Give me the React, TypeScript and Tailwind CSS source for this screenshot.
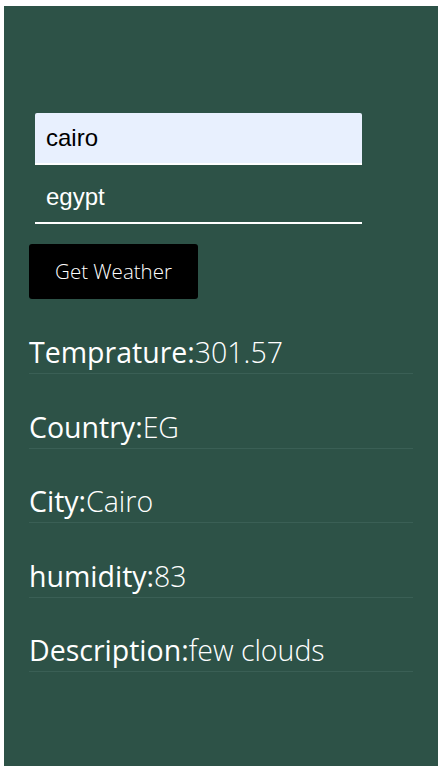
import React from "react";

const rows: [string, string][] = [
  ["Temprature:", "301.57"],
  ["Country:", "EG"],
  ["City:", "Cairo"],
  ["humidity:", "83"],
  ["Description:", "few clouds"],
];

export default function App() {
  return (
    <div className="bg-white pt-[6px] pb-[6px] pl-[4px] pr-[2px]">
      <div className="h-[760px] bg-[#2d5247] px-[25px] pt-[107px] font-['Open_Sans',sans-serif]">
        <div className="ml-[6px] flex w-[327px] flex-col gap-[7px]">
          <input
            defaultValue="cairo"
            className="h-[52px] w-full rounded-t-[2px] border-b-[2px] border-white bg-[#e8f0fe] px-[11px] font-['Liberation_Sans',Arial,sans-serif] text-[24px] text-black outline-none"
          />
          <input
            defaultValue="egypt"
            className="h-[52px] w-full border-b-[2px] border-white bg-transparent px-[11px] font-['Liberation_Sans',Arial,sans-serif] text-[24px] text-white outline-none"
          />
        </div>
        <button className="mt-[20px] flex h-[55px] w-[169px] items-center justify-center rounded-[3px] bg-black text-[20.5px] font-light text-white">
          Get Weather
        </button>
        <div className="mt-[0.5px] flex flex-col">
          {rows.map(([label, value]) => (
            <div
              key={label}
              className="flex h-[74.5px] items-end border-b border-[#3a5f55] pb-[2px] text-[28.5px] leading-[38px] text-white"
            >
              <span className="font-normal">{label}</span>
              <span className="font-light">{value}</span>
            </div>
          ))}
        </div>
      </div>
    </div>
  );
}
